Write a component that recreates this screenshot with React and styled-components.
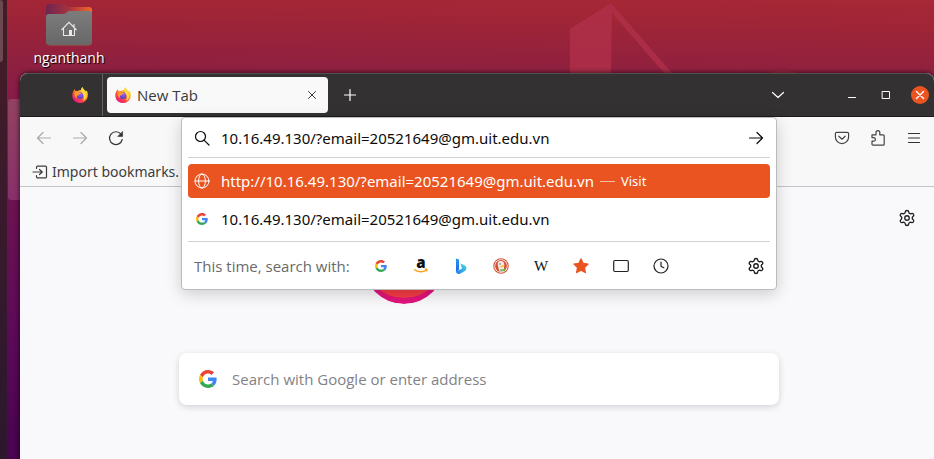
import React, { useState } from "react";
import styled, { createGlobalStyle } from "styled-components";
import { Settings } from "lucide-react";

const GlobalStyle = createGlobalStyle`
  *, *::before, *::after { box-sizing: border-box; }
  body {
    margin: 0;
    font-family: "Noto Sans", "Open Sans", sans-serif;
    font-size: 14px;
    line-height: 20px;
    color: #3d3d3d;
  }
  button, input { font: inherit; color: inherit; }
`;

const Desktop = styled.div`
  display: flex;
  min-height: 100vh;
  background: linear-gradient(181deg, #a72837 0, #a02536 25px, #8f2040 78px, #871c48 110px, #6b1250 220px, #5c0a58 350px, #4a0450 459px);
`;

const Dock = styled.aside`
  flex: none;
  width: 7px;
  background: linear-gradient(#451c26, #3a1a2c 200px, #2b182d 459px);
`;

const DockItem = styled.div`
  width: 3px;
  height: 62px;
  border-radius: 0 3px 3px 0;
  background: #6b4950;
`;

const Workspace = styled.main`
  flex: 1;
  min-width: 0;
  display: flex;
  flex-direction: column;
`;

const Shelf = styled.div`
  display: flex;
  justify-content: space-between;
  height: 73px;
  padding: 4px 0 0 20px;
`;

const Folder = styled.button`
  display: flex;
  flex-direction: column;
  align-items: center;
  gap: 1px;
  width: 84px;
  padding: 0;
  border: 0;
  background: none;
  color: #fff;
  font-family: "Open Sans", "Noto Sans", sans-serif;
  text-shadow: 1px 1px 1px #000;
  line-height: 22px;
`;

const Wallpaper = styled.svg`
  width: 280px;
  height: 71px;
  margin: -2px 84px 0 0;
`;

const WindowRow = styled.div`
  flex: 1;
  display: flex;
`;

const Edge = styled.div`
  flex: none;
  width: 13px;
  padding: 26px 0 0 1px;
`;

const Ribbon = styled.div`
  height: 101px;
  border-radius: 3px 0 0 3px;
  background: linear-gradient(#934260, #89306a);
`;

const Browser = styled.section`
  flex: 1;
  min-width: 0;
  display: flex;
  flex-direction: column;
  border-radius: 8px 8px 0 0;
  background: #f9f9fb;
  box-shadow: 0 0 4px 1px #0008;
`;

const TitleBar = styled.header`
  display: flex;
  align-items: center;
  height: 44px;
  padding-right: 5px;
  border-radius: 8px 8px 0 0;
  border-top: 1px solid #504e4e;
  border-bottom: 1px solid #1c1b1b;
  background: #333131;
  color: #fff;
`;

const IconButton = styled.button`
  display: grid;
  place-items: center;
  flex: none;
  width: ${(p) => p.$size || 16}px;
  height: ${(p) => p.$size || 16}px;
  padding: 0;
  border: 0;
  border-radius: 50%;
  background: ${(p) => p.$fill || "none"};
  color: ${(p) => p.$color || "inherit"};
  svg { display: block; overflow: visible; }
`;

const PinnedTab = styled.button`
  display: flex;
  align-items: center;
  justify-content: flex-end;
  width: 83px;
  height: 100%;
  margin-right: 4px;
  padding: 0 14px 0 0;
  border: 0;
  border-right: 1px solid #656363;
  background: none;
`;

const Tab = styled.div`
  display: flex;
  align-items: center;
  gap: 6px;
  width: 221px;
  height: 36px;
  margin-right: 14px;
  padding: 0 8px;
  border-radius: 4px;
  background: #f9f9fa;
  color: #3a3a3a;
`;

const TabTitle = styled.span`
  flex: 1;
  font-family: "Open Sans", "Noto Sans", sans-serif;
  font-size: 15px;
`;

const WindowControls = styled.div`
  display: flex;
  gap: 16px;
  margin-left: 56px;
`;

const Spacer = styled.div`
  flex: 1;
`;

const NavBar = styled.div`
  display: flex;
  height: 41px;
  background: #f8f8f8;
`;

const NavGroup = styled.div`
  display: flex;
  flex: none;
  align-items: center;
  justify-content: ${(p) => (p.$end ? "flex-end" : "flex-start")};
  gap: 20px;
  width: ${(p) => (p.$end ? 157 : 161)}px;
  padding: 0 12px 0 16px;
`;

const UrlSlot = styled.div`
  position: relative;
  flex: 1;
  min-width: 0;
`;

const UrlPopup = styled.form`
  position: absolute;
  z-index: 2;
  top: 0;
  left: 0;
  right: 0;
  padding: 0 6px;
  border: 1px solid #bcbcbc;
  border-radius: 4px;
  background: #fff;
  color: #0c0c0c;
  font-size: 15px;
  box-shadow: 0 4px 16px #0000002e;
`;

const UrlRow = styled.div`
  display: flex;
  align-items: center;
  gap: 11px;
  height: 40px;
  padding: 0 6px;
  border-bottom: 1px solid #d2d2d2;
`;

const Field = styled.input`
  flex: 1;
  min-width: 0;
  padding: 0;
  border: 0;
  outline: 0;
  background: none;
  &::placeholder { color: #828286; opacity: 1; }
`;

const Results = styled.ul`
  display: grid;
  gap: 4px;
  margin: 0;
  padding: 6px 0 5px;
  list-style: none;
  border-bottom: 1px solid #d2d2d2;
`;

const Result = styled.button`
  display: flex;
  align-items: center;
  gap: 11px;
  width: 100%;
  height: 34px;
  padding: 0 6px;
  border: 0;
  border-radius: 4px;
  text-align: left;
  white-space: nowrap;
  background: ${(p) => (p.$active ? "#e95420" : "none")};
  color: ${(p) => (p.$active ? "#fff" : "#0c0c0c")};
  svg { flex: none; }
`;

const Action = styled.span`
  display: flex;
  align-items: center;
  gap: 6px;
  margin-left: -5px;
  font-size: 13px;
  &::before {
    content: "";
    width: 15px;
    height: 1px;
    background: #f7bca7;
  }
`;

const OneOff = styled.div`
  display: flex;
  align-items: center;
  height: 47px;
  padding: 0 5px 0 6px;
  color: #6a6a6a;
`;

const OneOffLabel = styled.span`
  flex: none;
  width: 178px;
  white-space: nowrap;
  font-family: "Open Sans", "Noto Sans", sans-serif;
`;

const Engines = styled.div`
  display: flex;
  flex: 1;
  gap: 22px;
`;

const Bookmarks = styled.div`
  display: flex;
  height: 29px;
  padding: 0 12px;
  border-bottom: 1px solid #c4c4c4;
  background: #f8f8f8;
`;

const BookmarkButton = styled.button`
  display: flex;
  align-items: center;
  gap: 4px;
  padding: 0;
  border: 0;
  background: none;
`;

const Page = styled.div`
  flex: 1;
  padding: 22px 18px 54px 22px;
`;

const PageTop = styled.div`
  display: grid;
  grid-template-columns: 1fr 232px 1fr;
  align-items: start;
  height: 144px;
`;

const LogoSlot = styled.div`
  grid-column: 2;
  padding-top: 13px;
`;

const Customize = styled.div`
  display: flex;
  justify-content: flex-end;
`;

const SearchBox = styled.label`
  display: flex;
  align-items: center;
  gap: 15px;
  width: 100%;
  max-width: 600px;
  height: 52px;
  margin: 0 auto;
  padding: 0 20px;
  border-radius: 8px;
  background: #fff;
  font-family: "Open Sans", "Noto Sans", sans-serif;
  font-size: 15px;
  box-shadow: 0 2px 6px #3a394433;
`;

function Line({ size = 16, width = 1.2, children }) {
  return (
    <svg width={size} height={size} viewBox="0 0 16 16" fill="none" stroke="currentColor"
      strokeWidth={width} strokeLinecap="round" strokeLinejoin="round" aria-hidden="true">
      {children}
    </svg>
  );
}

function Google({ size }) {
  return (
    <svg width={size} height={size} viewBox="0 0 48 48" aria-hidden="true">
      <path fill="#ea4335" d="M24 9.5c3.54 0 6.71 1.22 9.21 3.6l6.85-6.85C35.9 2.38 30.47 0 24 0 14.62 0 6.51 5.38 2.56 13.22l7.98 6.19C12.43 13.72 17.74 9.5 24 9.5z" />
      <path fill="#4285f4" d="M46.98 24.55c0-1.57-.15-3.09-.38-4.55H24v9.02h12.94c-.58 2.96-2.26 5.48-4.78 7.18l7.73 6c4.51-4.18 7.09-10.36 7.09-17.65z" />
      <path fill="#fbbc05" d="M10.53 28.59c-.48-1.45-.76-2.99-.76-4.59s.27-3.14.76-4.59l-7.98-6.19C.92 16.46 0 20.12 0 24c0 3.88.92 7.54 2.56 10.78l7.97-6.19z" />
      <path fill="#34a853" d="M24 48c6.48 0 11.93-2.13 15.89-5.81l-7.73-6c-2.15 1.45-4.92 2.3-8.16 2.3-6.26 0-11.57-4.22-13.47-9.91l-7.98 6.19C6.51 42.62 14.62 48 24 48z" />
    </svg>
  );
}

function Firefox({ id }) {
  return (
    <svg width="16" height="16" viewBox="0 0 32 32" aria-hidden="true">
      <defs>
        <linearGradient id={`${id}-body`} x1="0.85" y1="0.1" x2="0.2" y2="0.95">
          <stop offset="0" stopColor="#fff44f" />
          <stop offset="0.35" stopColor="#ffa72b" />
          <stop offset="0.65" stopColor="#ff4a41" />
          <stop offset="1" stopColor="#e31587" />
        </linearGradient>
        <radialGradient id={`${id}-globe`} cx="0.6" cy="0.3" r="0.8">
          <stop offset="0" stopColor="#a05cff" />
          <stop offset="1" stopColor="#4b38b8" />
        </radialGradient>
      </defs>
      <path fill={`url(#${id}-body)`} d="M3 8 5 4l2 4 4 0C14 6 17 6 18 6c0-3 1-5 3-6 1 4 5 6 7 9l1-2c3 4 3 9 2 14-2 7-8 11-15 11C8 32 2 27 1 20 0 15 1 11 3 8z" />
      <circle cx="16" cy="17" r="7" fill={`url(#${id}-globe)`} />
      <path fill="#ff9a2c" d="M6 9c3-1 6 0 7 2 2-1 5 0 6 2-2 0-4 1-5 2 0 2-2 2-4 2-1 2 0 4 2 5-4 0-7-3-7-7 0-2 0-4 1-6z" />
      <path fill="#ffdc3e" d="M20 3c2 5 7 7 8 14 1 5-2 9-6 11 3-5 3-11-1-15-3-3-3-7-1-10z" />
    </svg>
  );
}

const DuckIcon = () => (
  <svg width="16" height="16" viewBox="0 0 32 32" aria-hidden="true">
    <circle cx="16" cy="16" r="15.5" fill="#d64e35" />
    <circle cx="16" cy="16" r="13.4" fill="#fff" />
    <circle cx="16" cy="16" r="11.8" fill="#d64e35" />
    <path fill="#f4e8e2" d="M10 9c2-4 10-4 12 1 1 3 0 6 0 9l1 7c-3 2-7 2-10 1-1-5-5-13-3-18z" />
    <circle cx="14" cy="12" r="1.4" fill="#33516b" />
    <path fill="#f7b82b" d="M15 16c3-2 7-2 9-1-2 2-5 3-9 4z" />
    <path fill="#5bb345" d="m15 22 4 1 5-2v6l-5-2-4 2z" />
  </svg>
);

const BingIcon = () => (
  <svg width="16" height="16" viewBox="0 0 16 16" aria-hidden="true">
    <defs>
      <linearGradient id="bing-stem" x1="0" y1="0" x2="0" y2="1">
        <stop stopColor="#2a9bf0" />
        <stop offset="1" stopColor="#1b63e8" />
      </linearGradient>
      <linearGradient id="bing-bowl" x1="1" y1="0" x2="0" y2="1">
        <stop stopColor="#4ee0dc" />
        <stop offset="1" stopColor="#1c7af0" />
      </linearGradient>
    </defs>
    <path fill="url(#bing-stem)" d="M3 .5 6 1.6v10L3 14z" />
    <path fill="url(#bing-bowl)" d="M7.5 5.500 12 7.600c2 1.200 2 4 .3 5.200L7 15.800c-2 .6-4-.4-4-2.500l6-2.500z" />
  </svg>
);

const AmazonIcon = () => (
  <svg width="16" height="16" viewBox="0 0 16 16" overflow="visible" aria-hidden="true">
    <text x="8" y="9.5" textAnchor="middle" fontFamily="Open Sans" fontWeight="800" fontSize="15" fill="#111">a</text>
    <path d="M1 11.2c4 3.3 9 3.3 12.2 1M11.8 11.2c2-.6 2.8-.1 1.8 2.2" fill="none" stroke="#f9a11b" strokeWidth="1.4" />
  </svg>
);

const WikiIcon = () => (
  <svg width="16" height="16" viewBox="0 0 16 16" overflow="visible" aria-hidden="true">
    <text x="8" y="13" textAnchor="middle" fontFamily="Liberation Serif" fontSize="15" fill="#111">W</text>
  </svg>
);

const StarIcon = () => (
  <svg width="16" height="16" viewBox="0 0 16 16" aria-hidden="true">
    <path d="m8 1 2.1 4.5 4.9.6-3.6 3.4.9 5L8 12.1l-4.3 2.4.9-5L1 6.1l4.9-.6z" fill="#e95420" stroke="#e95420" strokeWidth="1.4" strokeLinejoin="round" />
  </svg>
);

const Glyphs = {
  back: <path d="M14.5 8H1.5M7 2.5 1.5 8 7 13.5" />,
  forward: <path d="M1.5 8h13M9 2.5 14.5 8 9 13.5" />,
  reload: (
    <>
      <path d="M14.2 9.5A6.4 6.4 0 1 1 13 4.2" />
      <path d="M14.6 1.8v4.6H10z" fill="currentColor" strokeWidth="0.6" />
    </>
  ),
  search: <><circle cx="6.5" cy="6.5" r="5" /><path d="m10.3 10.3 4.7 4.7" /></>,
  globe: (
    <>
      <circle cx="8" cy="8" r="7" />
      <ellipse cx="8" cy="8" rx="3.4" ry="7" />
      <path d="M1 8h14" />
    </>
  ),
  pocket: (
    <>
      <path d="M2.8 2.3h10.4a1.4 1.4 0 0 1 1.4 1.4V7a6.6 6.6 0 0 1-13.2 0V3.7a1.4 1.4 0 0 1 1.4-1.4z" />
      <path d="m4.8 6.2 3.2 3 3.2-3" />
    </>
  ),
  puzzle: (
    <path d="M2 4.8h4V2.6a1.9 1.9 0 0 1 3.8 0v2.2h3.4a1 1 0 0 1 1 1v8.4a1 1 0 0 1-1 1H3a1 1 0 0 1-1-1v-3h1.6a1.8 1.8 0 0 0 0-3.6H2z" />
  ),
  menu: <path d="M2.5 3.5h11M2.5 8h11M2.5 12.5h11" />,
  close: <path d="m4.5 4.5 7 7m0-7-7 7" />,
  plus: <path d="M8 2.5v11M2.5 8h11" />,
  chevron: <path d="m2.5 5.5 5.5 5 5.5-5" />,
  minimise: <path d="M4.5 10.5h7" />,
  maximise: <path d="M4.5 4.5h7v7h-7z" strokeLinejoin="miter" />,
  import: (
    <>
      <path d="M4.500 4.500V3.300a1.200 1.200 0 0 1 1.200-1.200h7.600a1.200 1.200 0 0 1 1.200 1.200v9.400a1.200 1.200 0 0 1-1.200 1.200H5.700a1.200 1.200 0 0 1-1.200-1.200V11.500" />
      <path d="M1 8h9M7.500 5.500 10.300 8l-2.800 2.500" />
    </>
  ),
  panel: <rect x="0.7" y="2.5" width="14.6" height="11" rx="1.2" />,
  clock: <><circle cx="8" cy="8" r="7" /><path d="M8 4v4.3l2.8 1.4" /></>,
};

const engines = [
  { name: "Google", icon: <Google size={12} /> },
  { name: "Amazon", icon: <AmazonIcon /> },
  { name: "Bing", icon: <BingIcon /> },
  { name: "DuckDuckGo", icon: <DuckIcon /> },
  { name: "Wikipedia", icon: <WikiIcon /> },
  { name: "Bookmarks", icon: <StarIcon /> },
  { name: "Tabs", icon: <Line>{Glyphs.panel}</Line> },
  { name: "History", icon: <Line>{Glyphs.clock}</Line> },
];

const FolderIcon = () => (
  <svg width="46" height="42" viewBox="0 0 46 42" aria-hidden="true">
    <defs>
      <linearGradient id="folder-back">
        <stop stopColor="#6c2551" />
        <stop offset="0.5" stopColor="#a93240" />
        <stop offset="1" stopColor="#ef6a2c" />
      </linearGradient>
      <linearGradient id="folder-front" x1="0" y1="0" x2="0" y2="1">
        <stop stopColor="#7c7c7c" />
        <stop offset="1" stopColor="#686868" />
      </linearGradient>
    </defs>
    <path fill="url(#folder-back)" d="M0 3q0-3 3-3h13q2 0 3 1l3 2h21q3 0 3 3v20H0z" />
    <path fill="url(#folder-front)" d="M0 13q0-3 3-3h14q2 0 3-1l3-2h20q3 0 3 3v28q0 3-3 3H3q-3 0-3-3z" />
    <path d="M3 41.3h40q2.4 0 3-3" fill="none" stroke="#92504e" strokeWidth="1" />
    <path fill="none" stroke="#e8e8e8" strokeWidth="1.1" d="M15.5 26 23 18.3l7.5 7.700M17.5 24.500v7h11v-7M28 20v3" />
    <path fill="#e8e8e8" d="M23 26h3v6h-3z" />
  </svg>
);

export default function App() {
  const [url, setUrl] = useState("10.16.49.130/?email=20521649@gm.uit.edu.vn");
  const [query, setQuery] = useState("");
  return (
    <>
      <GlobalStyle />
      <Desktop>
        <Dock><DockItem /></Dock>
        <Workspace>
          <Shelf>
            <Folder type="button"><FolderIcon /><span>nganthanh</span></Folder>
            <Wallpaper viewBox="0 0 280 71" aria-hidden="true">
              <path fill="#b0304a" opacity="0.8" d="M0 27 41 1l61 70H94L42 11l-1 60H0z" />
              <path fill="#a12b45" d="M198 71q15-4 29 0z" />
            </Wallpaper>
          </Shelf>
          <WindowRow>
            <Edge><Ribbon /></Edge>
            <Browser>
              <TitleBar>
                <PinnedTab type="button" aria-label="Firefox View"><Firefox id="pinned" /></PinnedTab>
                <Tab>
                  <Firefox id="tab" />
                  <TabTitle>New Tab</TabTitle>
                  <IconButton aria-label="Close tab"><Line width={1}>{Glyphs.close}</Line></IconButton>
                </Tab>
                <IconButton aria-label="New tab"><Line>{Glyphs.plus}</Line></IconButton>
                <Spacer />
                <IconButton $size={18} aria-label="List all tabs"><Line>{Glyphs.chevron}</Line></IconButton>
                <WindowControls>
                  <IconButton $size={18} aria-label="Minimise"><Line width={1}>{Glyphs.minimise}</Line></IconButton>
                  <IconButton $size={18} aria-label="Maximise"><Line width={1}>{Glyphs.maximise}</Line></IconButton>
                  <IconButton $size={18} $fill="#e95420" aria-label="Close"><Line width={1.4}>{Glyphs.close}</Line></IconButton>
                </WindowControls>
              </TitleBar>
              <NavBar>
                <NavGroup>
                  <IconButton $color="#aaa" aria-label="Back"><Line>{Glyphs.back}</Line></IconButton>
                  <IconButton $color="#aaa" aria-label="Forward"><Line>{Glyphs.forward}</Line></IconButton>
                  <IconButton $color="#333" aria-label="Reload"><Line>{Glyphs.reload}</Line></IconButton>
                </NavGroup>
                <UrlSlot>
                  <UrlPopup onSubmit={(e) => e.preventDefault()}>
                    <UrlRow>
                      <Line>{Glyphs.search}</Line>
                      <Field aria-label="Address" value={url} onChange={(e) => setUrl(e.target.value)} />
                      <IconButton aria-label="Go"><Line>{Glyphs.forward}</Line></IconButton>
                    </UrlRow>
                    <Results>
                      <li>
                        <Result type="button" $active>
                          <Line width={1}>{Glyphs.globe}</Line>
                          <span>http://10.16.49.130/?email=20521649@gm.uit.edu.vn</span>
                          <Action>Visit</Action>
                        </Result>
                      </li>
                      <li>
                        <Result type="button">
                          <svg width="16" height="16" viewBox="-2 -2 16 16"><Google size={12} /></svg>
                          <span>10.16.49.130/?email=20521649@gm.uit.edu.vn</span>
                        </Result>
                      </li>
                    </Results>
                    <OneOff>
                      <OneOffLabel>This time, search with:</OneOffLabel>
                      <Engines>
                        {engines.map((e) => (
                          <IconButton key={e.name} type="button" $size={18} $color="#222" aria-label={e.name}>{e.icon}</IconButton>
                        ))}
                      </Engines>
                      <IconButton type="button" $size={18} $color="#1a1a1a" aria-label="Search settings"><Settings size={18} strokeWidth={1.8} /></IconButton>
                    </OneOff>
                  </UrlPopup>
                </UrlSlot>
                <NavGroup $end>
                  <IconButton $color="#444" aria-label="Pocket"><Line>{Glyphs.pocket}</Line></IconButton>
                  <IconButton $color="#444" aria-label="Extensions"><Line>{Glyphs.puzzle}</Line></IconButton>
                  <IconButton $color="#333" aria-label="Menu"><Line>{Glyphs.menu}</Line></IconButton>
                </NavGroup>
              </NavBar>
              <Bookmarks>
                <BookmarkButton type="button"><Line>{Glyphs.import}</Line><span>Import bookmarks.</span></BookmarkButton>
              </Bookmarks>
              <Page>
                <PageTop>
                  <LogoSlot>
                    <svg width="82" height="82" viewBox="0 0 82 82" role="img" aria-label="Firefox">
                      <defs><clipPath id="logo-disc"><circle cx="41" cy="41" r="41" /></clipPath></defs>
                      <g clipPath="url(#logo-disc)">
                        <circle cx="41" cy="41" r="41" fill="#e3137b" />
                        <circle cx="41" cy="35" r="41" fill="#f43b46" />
                      </g>
                    </svg>
                  </LogoSlot>
                  <Customize>
                    <IconButton $size={18} $color="#222" aria-label="Personalize new tab"><Settings size={18} strokeWidth={1.8} /></IconButton>
                  </Customize>
                </PageTop>
                <SearchBox>
                  <Google size={18} />
                  <Field aria-label="Search" placeholder="Search with Google or enter address" value={query} onChange={(e) => setQuery(e.target.value)} />
                </SearchBox>
              </Page>
            </Browser>
          </WindowRow>
        </Workspace>
      </Desktop>
    </>
  );
}
